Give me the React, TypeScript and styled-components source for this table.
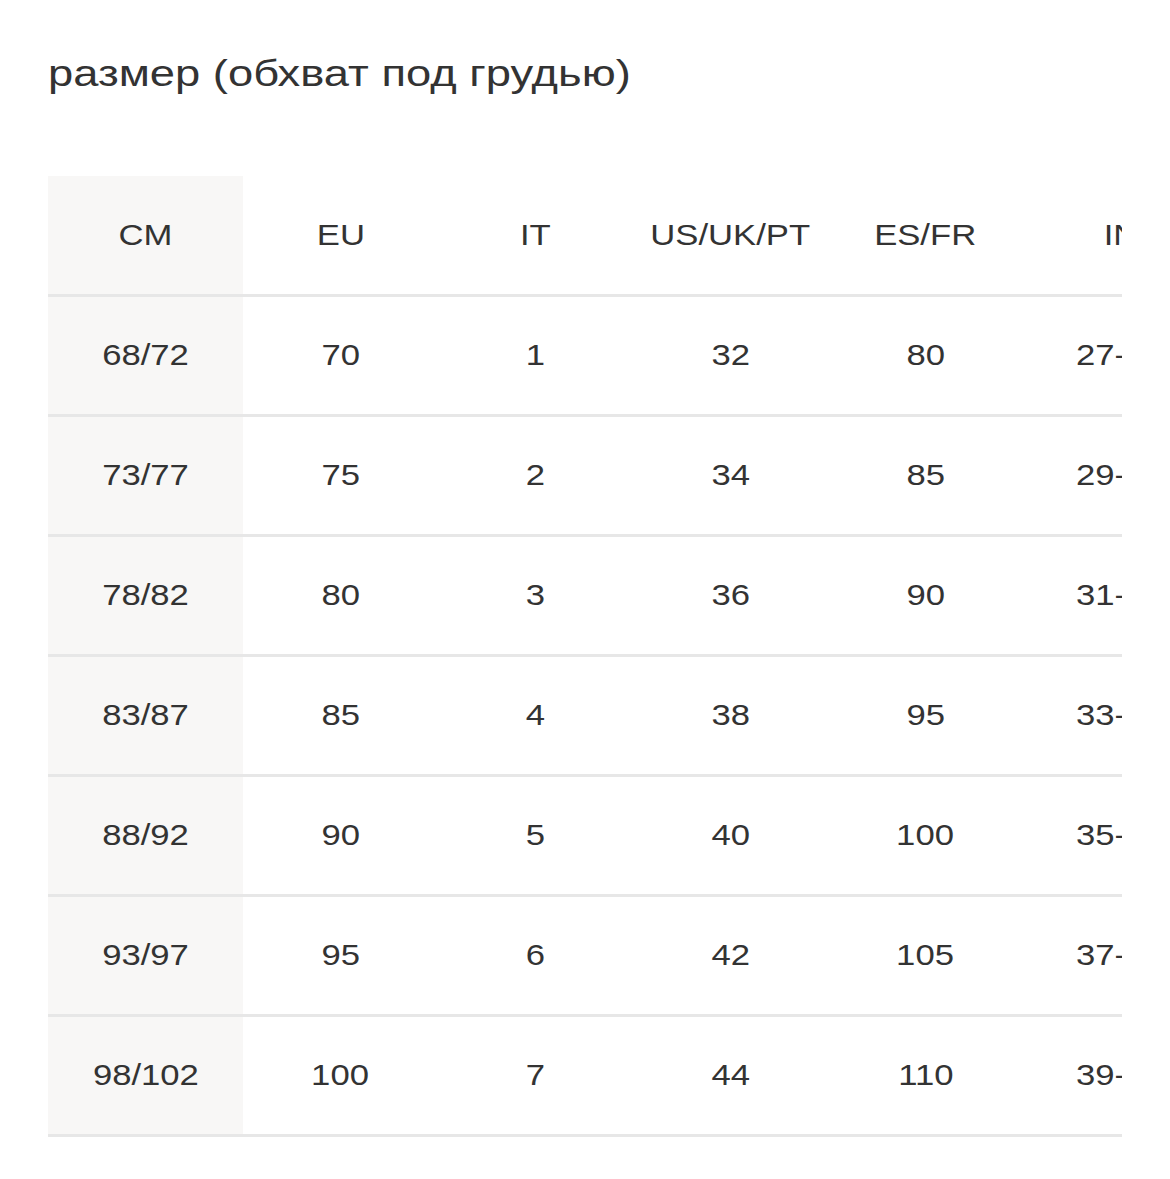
import React from "react";
import styled, { createGlobalStyle } from "styled-components";

const Global = createGlobalStyle`
  html, body { margin: 0; padding: 0; background: #ffffff; }
  body { font-family: "Liberation Sans", Arial, sans-serif; color: #333333; }
`;

const Page = styled.div`
  padding: 52px 48px 0 48px;
`;

const Title = styled.h2`
  margin: 0;
  display: inline-block;
  font-family: "Liberation Sans", Arial, sans-serif;
  font-size: 37px;
  line-height: 44px;
  font-weight: 400;
  color: #333333;
  white-space: nowrap;
  transform: scaleX(1.225);
  transform-origin: left center;
`;

const Scroller = styled.div`
  margin-top: 80px;
  width: 1074px;
  overflow: hidden;
`;

const Table = styled.table`
  border-collapse: collapse;
  table-layout: fixed;
  width: 1170px;
`;

const Cell = styled.td<{ $first?: boolean; $header?: boolean }>`
  width: 195px;
  height: ${(p) => (p.$header ? 119 : 120)}px;
  padding: 0 0 ${(p) => (p.$header ? 0 : 1)}px 0;
  box-sizing: border-box;
  text-align: center;
  vertical-align: middle;
  font-family: "Liberation Sans", Arial, sans-serif;
  font-size: 30px;
  font-weight: 400;
  color: #333333;
  background: ${(p) => (p.$first ? "#f8f7f6" : "#ffffff")};
  border-bottom: 3px solid #e7e7e7;
  white-space: nowrap;
`;

const Wide = styled.span`
  display: inline-block;
  transform: scaleX(1.155);
  transform-origin: center center;
`;

const header = ["CM", "EU", "IT", "US/UK/PT", "ES/FR", "IN"];
const rows = [
  ["68/72", "70", "1", "32", "80", "27-28"],
  ["73/77", "75", "2", "34", "85", "29-30"],
  ["78/82", "80", "3", "36", "90", "31-32"],
  ["83/87", "85", "4", "38", "95", "33-34"],
  ["88/92", "90", "5", "40", "100", "35-36"],
  ["93/97", "95", "6", "42", "105", "37-38"],
  ["98/102", "100", "7", "44", "110", "39-40"],
];

export default function App() {
  return (
    <Page>
      <Global />
      <Title>размер (обхват под грудью)</Title>
      <Scroller>
        <Table>
          <thead>
            <tr>
              {header.map((h, i) => (
                <Cell as="th" key={h} $first={i === 0} $header>
                  <Wide>{h}</Wide>
                </Cell>
              ))}
            </tr>
          </thead>
          <tbody>
            {rows.map((r) => (
              <tr key={r[0]}>
                {r.map((c, i) => (
                  <Cell key={i} $first={i === 0}>
                    <Wide>{c}</Wide>
                  </Cell>
                ))}
              </tr>
            ))}
          </tbody>
        </Table>
      </Scroller>
    </Page>
  );
}
